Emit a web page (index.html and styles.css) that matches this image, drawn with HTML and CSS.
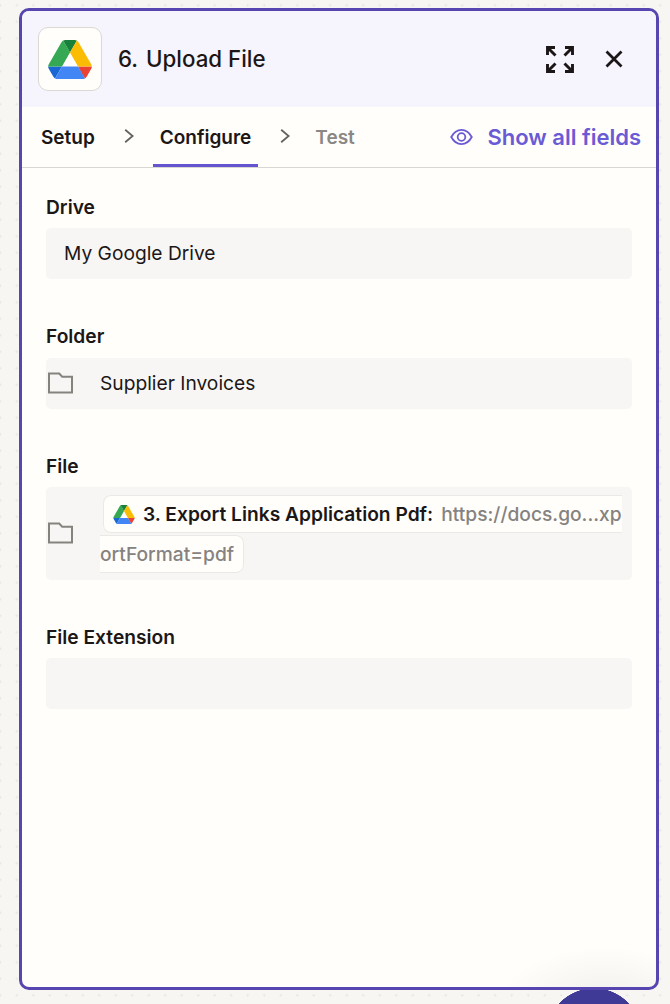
FILE: index.html
```html
<!DOCTYPE html>
<html lang="en">
<head>
<meta charset="utf-8">
<title>Upload File</title>
<link rel="stylesheet" href="styles.css">
</head>
<body>
<svg class="defs" width="0" height="0" aria-hidden="true">
  <symbol id="drive" viewBox="0 0 87.3 78">
    <path d="m6.6 66.85 3.85 6.65c.8 1.4 1.95 2.5 3.3 3.3l13.75-23.8h-27.5c0 1.55.4 3.1 1.2 4.5z" fill="#1967d2"/>
    <path d="m43.65 25-13.75-23.8c-1.35.8-2.5 1.9-3.3 3.3l-25.4 44a9.06 9.06 0 0 0 -1.2 4.5h27.5z" fill="#34a853"/>
    <path d="m73.55 76.8c1.35-.8 2.5-1.9 3.3-3.3l1.6-2.75 7.65-13.25c.8-1.4 1.2-2.95 1.2-4.5h-27.502l5.852 11.5z" fill="#ea4335"/>
    <path d="m43.65 25 13.75-23.8c-1.35-.8-2.9-1.2-4.5-1.2h-18.5c-1.6 0-3.15.45-4.5 1.2z" fill="#188038"/>
    <path d="m59.8 53h-32.3l-13.75 23.8c1.35.8 2.9 1.2 4.5 1.2h50.8c1.6 0 3.15-.45 4.5-1.2z" fill="#4285f4"/>
    <path d="m73.4 26.5-12.7-22c-.8-1.4-1.95-2.5-3.3-3.3l-13.75 23.8 16.15 28h27.45c0-1.55-.4-3.1-1.2-4.5z" fill="#fbbc04"/>
  </symbol>
  <symbol id="folder" viewBox="0 0 25 22">
    <path d="M1 20.5V1.5h10.2l3 3.2H24v15.8z" fill="none" stroke="currentColor" stroke-width="2"/>
  </symbol>
  <symbol id="chev" viewBox="0 0 10 16">
    <path d="M1.2 0.7 8.6 7 1.2 13.300" fill="none" stroke="currentColor" stroke-width="1.8"/>
  </symbol>
</svg>

<div class="fab"></div>
<main class="panel">
  <header class="head">
    <div class="logo"><svg class="logo-img"><use href="#drive"/></svg></div>
    <h1 class="title"><span class="title-num">6.</span> Upload File</h1>
    <svg class="expand" viewBox="0 0 28 27" fill="none" stroke="currentColor" stroke-width="2.9">
      <path d="M1.5 9V1.5H9M2 2 9.5 9.5"/>
      <path d="M19 1.5h7.5V9M26 2 18.500 9.500"/>
      <path d="M1.500 18v7.500H9M2 25 9.500 17.500"/>
      <path d="M19 25.500h7.500V18M26 25 18.500 17.500"/>
    </svg>
    <svg class="close" viewBox="0 0 18 18" fill="none" stroke="currentColor" stroke-width="2.8">
      <path d="M1.5 1.5 16.5 16.5M16.5 1.5 1.5 16.5"/>
    </svg>
  </header>

  <nav class="tabs">
    <span class="tab">Setup</span>
    <svg class="chev"><use href="#chev"/></svg>
    <span class="tab tab-active">Configure</span>
    <svg class="chev"><use href="#chev"/></svg>
    <span class="tab tab-muted">Test</span>
    <a class="show-all">
      <svg class="eye" viewBox="0 0 24 18" fill="none" stroke="currentColor" stroke-width="1.9">
        <path d="M1.3 9C4 4 7.7 1.6 12 1.6S20 4 22.7 9C20 14 16.3 16.4 12 16.4S4 14 1.3 9z"/>
        <circle cx="12" cy="9" r="4"/>
      </svg>
      Show all fields
    </a>
  </nav>

  <section class="form">
    <div class="field">
      <div class="label">Drive</div>
      <div class="input input-plain">My Google Drive</div>
    </div>
    <div class="field">
      <div class="label">Folder</div>
      <div class="input input-icon">
        <svg class="folder"><use href="#folder"/></svg>
        <span>Supplier Invoices</span>
      </div>
    </div>
    <div class="field">
      <div class="label">File</div>
      <div class="input input-tall">
        <svg class="folder"><use href="#folder"/></svg>
        <div class="chip-wrap"><span class="chip"><svg class="chip-logo"><use href="#drive"/></svg><b class="chip-name">3. Export Links Application Pdf:</b><span class="chip-val">https://docs.go...xp</span><span class="chip-val">ortFormat=pdf</span></span></div>
      </div>
    </div>
    <div class="field">
      <div class="label">File Extension</div>
      <div class="input input-plain"></div>
    </div>
  </section>
</main>
</body>
</html>
```
FILE: styles.css
```css
* { box-sizing: border-box; }
html { margin: 0; height: 100%; overflow: hidden; }
body {
  margin: 0;
  width: 670px;
  height: 1004px;
  overflow: hidden;
  position: relative;
  padding: 8px 11px 14px 19px;
  font-family: Inter, "Liberation Sans", sans-serif;
  color: #1c1716;
  background-color: #f7f6f3;
  background-image: radial-gradient(circle, #eae8e4 1px, transparent 1.4px);
  background-size: 16.5px 16.5px;
  background-position: -8px -3px;
}
.defs { position: absolute; }
.fab {
  position: absolute;
  left: 546px;
  top: 988px;
  width: 96px;
  height: 16px;
  background: radial-gradient(circle 48px at 48px 48px, #3e3a96 99%, transparent 100%);
}
.panel {
  position: relative;
  height: 982px;
  border: 3px solid #5746af;
  border-radius: 10px;
  background: #fffefb;
  overflow: hidden;
}
.panel::after {
  content: "";
  position: absolute;
  right: -60px;
  bottom: -80px;
  width: 220px;
  height: 120px;
  background: radial-gradient(closest-side, rgba(90, 85, 75, .09), transparent);
}
.head {
  height: 96px;
  background: #f6f4fd;
  display: flex;
  align-items: center;
  padding: 0 33px 0 16px;
}
.logo {
  width: 64px;
  height: 64px;
  background: #fffefb;
  border: 1px solid #dcd9d4;
  border-radius: 10px;
  display: flex;
  align-items: center;
  justify-content: center;
}
.logo-img { width: 44px; height: 39px; }
.title {
  margin: 0 0 0 16px;
  flex: 1;
  font-size: 22.3px;
  line-height: 28px;
  font-weight: 500;
}
.title-num { margin-right: 2px; }
.expand { width: 28px; height: 27px; margin-right: 31px; }
.close { width: 18px; height: 18px; }
.tabs {
  height: 61px;
  display: flex;
  align-items: center;
  border-bottom: 1px solid #d9d7d2;
  padding: 0 15px 0 12px;
}
.tab {
  height: 60px;
  padding: 0 7px;
  display: flex;
  align-items: center;
  font-size: 19px;
  font-weight: 600;
  margin-right: 22px;
}
.tab-active { box-shadow: inset 0 -3px #6554d0; margin: 0 22px 0 19px; }
.tab-muted { color: #8a8784; margin: 0 0 0 18px; }
.chev { width: 10px; height: 16px; color: #66635f; }
.show-all {
  margin-left: auto;
  display: flex;
  align-items: center;
  color: #6a5bd5;
  font-size: 22px;
  font-weight: 600;
}
.eye { width: 23px; height: 18px; margin-right: 14px; }
.form { padding: 26.500px 24px 0; }
.field { margin-bottom: 45px; }
.label {
  font-size: 19.200px;
  line-height: 24px;
  font-weight: 600;
  margin-bottom: 9.500px;
}
.input {
  background: #f7f6f4;
  border-radius: 5px;
  font-size: 19.200px;
  line-height: 24px;
}
.input-plain { height: 51px; padding: 13px 18px; }
.input-icon {
  height: 51px;
  display: flex;
  align-items: center;
}
.input-tall {
  height: 92.800px;
  display: flex;
  align-items: center;
}
.folder { width: 25px; height: 22px; color: #86837f; margin-left: 2px; flex: none; }
.input-icon span { margin-left: 27px; }
.chip-wrap {
  margin-left: 27px;
  width: 523px;
  padding-top: 2px;
  line-height: 40px;
  text-indent: 3px;
  word-break: break-all;
}
.chip {
  background: #fffefb;
  border: 1px solid #ebe9e5;
  border-radius: 8px;
  padding: 6px 9px 6px 9px;
  -webkit-box-decoration-break: slice;
  box-decoration-break: slice;
}
.chip-logo { width: 22px; height: 19px; margin-right: 8px; vertical-align: -3px; }
.chip-name { font-weight: 600; margin-right: 8px; }
.chip-val { color: #858280; font-weight: 500; }
```
